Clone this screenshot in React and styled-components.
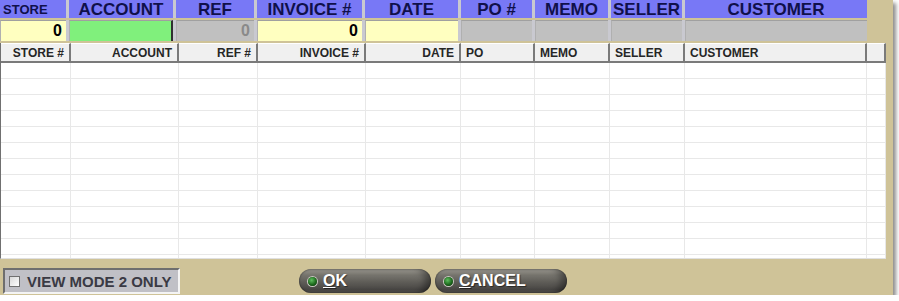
import React from "react";
import styled, { createGlobalStyle } from "styled-components";

const Global = createGlobalStyle`
  html, body { margin: 0; padding: 0; background: #ffffff; }
  body { font-family: "Liberation Sans", Arial, sans-serif; }
`;

const Window = styled.div`
  width: 893px;
  height: 295px;
  background: #cfc398;
  box-shadow: 3px 3px 4px rgba(0, 0, 0, 0.45);
  display: flex;
  flex-direction: column;
  box-sizing: border-box;
`;

const TOP_COLS = "66px 104px 78px 105px 93px 71px 73px 71px 182px";

const TopRow = styled.div`
  display: grid;
  grid-template-columns: ${TOP_COLS};
  column-gap: 3px;
  width: 867px;
  background: #c9c9d0;
  height: ${(p) => p.$h}px;
  margin-bottom: ${(p) => p.$mb || 0}px;
`;

const HeadCell = styled.div`
  background: #7878f6;
  color: #10104a;
  font-weight: bold;
  font-size: ${(p) => (p.$small ? 13 : 17)}px;
  display: flex;
  align-items: center;
  justify-content: ${(p) => (p.$left ? "flex-start" : "center")};
  padding-left: ${(p) => (p.$left ? 3 : 0)}px;
  line-height: 1;
`;

const InputCell = styled.div`
  background: ${(p) => p.$bg};
  color: ${(p) => p.$color || "#000"};
  font-weight: bold;
  font-size: 16px;
  display: flex;
  align-items: center;
  justify-content: flex-end;
  padding-right: 4px;
  box-sizing: border-box;
  border-top: 1px solid #a0a0a0;
  border-left: 1px solid #b0b0b0;
  border-right: ${(p) => (p.$caret ? "2px solid #303030" : "0")};
`;

const GRID_COLS = "70px 108px 79px 108px 95px 74px 75px 75px 182px 1fr";

const Grid = styled.div`
  width: 886px;
  height: 216px;
  background: #ffffff;
  border-left: 1px solid #707070;
  border-bottom: 1px solid #e0e0e0;
  box-sizing: border-box;
  display: flex;
  flex-direction: column;
  overflow: hidden;
`;

const GridHeader = styled.div`
  display: grid;
  grid-template-columns: ${GRID_COLS};
  height: 20px;
  flex: none;
`;

const GridHeadCell = styled.div`
  background: #f0f0f0;
  border-right: 2px solid #7a7a7a;
  border-bottom: 2px solid #7a7a7a;
  border-top: 1px solid #ffffff;
  box-sizing: border-box;
  font-size: 12px;
  font-weight: bold;
  color: #262626;
  display: flex;
  align-items: center;
  justify-content: ${(p) => (p.$right ? "flex-end" : "flex-start")};
  padding: 0 5px;
`;

const GridRow = styled.div`
  display: grid;
  grid-template-columns: ${GRID_COLS};
  height: 16px;
  flex: none;
`;

const GridCell = styled.div`
  border-right: 1px solid #e8e8e8;
  border-bottom: 1px solid #e8e8e8;
  box-sizing: border-box;
`;

const Footer = styled.div`
  flex: 1;
  display: flex;
  align-items: center;
  padding: 8px 0 0 3px;
  box-sizing: border-box;
`;

const CheckBox = styled.label`
  width: 177px;
  height: 26px;
  background: #c0c0c6;
  border: 2px solid #6e6e6e;
  border-right-color: #f4f4f4;
  border-bottom-color: #f4f4f4;
  box-sizing: border-box;
  display: flex;
  align-items: center;
  gap: 7px;
  padding-left: 4px;
  font-size: 15px;
  font-weight: bold;
  color: #3a3a44;
`;

const Box = styled.span`
  width: 11px;
  height: 11px;
  background: linear-gradient(135deg, #d8d8d8, #ffffff);
  border: 1px solid #707070;
  box-sizing: border-box;
`;

const Buttons = styled.div`
  display: flex;
  gap: 4px;
  margin-left: 119px;
`;

const Pill = styled.div`
  width: 132px;
  height: 24px;
  border-radius: 12px;
  background: linear-gradient(
    to bottom,
    #a8a59c 0%,
    #77756e 25%,
    #5e5c57 55%,
    #4a4845 85%,
    #5c5a55 100%
  );
  box-shadow: inset 0 0 2px rgba(0, 0, 0, 0.6), inset -6px 0 6px rgba(0, 0, 0, 0.35);
  display: flex;
  align-items: center;
  gap: 6px;
  padding-left: 9px;
  box-sizing: border-box;
  color: #ffffff;
  font-weight: bold;
  font-size: 16px;
  text-shadow: 1px 1px 1px rgba(0, 0, 0, 0.5);
`;

const Led = styled.span`
  width: 9px;
  height: 9px;
  border-radius: 50%;
  background: radial-gradient(circle at 40% 35%, #5fbf5f 0%, #1d6a1d 55%, #0c300c 100%);
  box-shadow: 0 0 0 1px #c8c8c0;
`;

const U = styled.span`
  text-decoration: underline;
`;

const tops = [
  { t: "STORE", small: true, left: true },
  { t: "ACCOUNT" },
  { t: "REF" },
  { t: "INVOICE #" },
  { t: "DATE" },
  { t: "PO #" },
  { t: "MEMO" },
  { t: "SELLER" },
  { t: "CUSTOMER" },
];

const inputs = [
  { bg: "#ffffc0", v: "0" },
  { bg: "#80f07c", v: "", caret: true },
  { bg: "#c0c0c0", v: "0", color: "#8a8a8a" },
  { bg: "#ffffc0", v: "0" },
  { bg: "#ffffc0", v: "" },
  { bg: "#c0c0c0", v: "" },
  { bg: "#c0c0c0", v: "" },
  { bg: "#c0c0c0", v: "" },
  { bg: "#c0c0c0", v: "" },
];

const gridHeads = [
  { t: "STORE #", r: true },
  { t: "ACCOUNT", r: true },
  { t: "REF #", r: true },
  { t: "INVOICE #", r: true },
  { t: "DATE", r: true },
  { t: "PO" },
  { t: "MEMO" },
  { t: "SELLER" },
  { t: "CUSTOMER" },
  { t: "" },
];

export default function App() {
  return (
    <>
      <Global />
      <Window>
        <TopRow $h={18} $mb={2}>
          {tops.map((c) => (
            <HeadCell key={c.t} $small={c.small} $left={c.left}>
              {c.t}
            </HeadCell>
          ))}
        </TopRow>
        <TopRow $h={21} $mb={2}>
          {inputs.map((c, i) => (
            <InputCell key={i} $bg={c.bg} $color={c.color} $caret={c.caret}>
              {c.v}
            </InputCell>
          ))}
        </TopRow>
        <Grid>
          <GridHeader>
            {gridHeads.map((h, i) => (
              <GridHeadCell key={i} $right={h.r}>
                {h.t}
              </GridHeadCell>
            ))}
          </GridHeader>
          {Array.from({ length: 13 }).map((_, r) => (
            <GridRow key={r}>
              {gridHeads.map((_, i) => (
                <GridCell key={i} />
              ))}
            </GridRow>
          ))}
        </Grid>
        <Footer>
          <CheckBox>
            <Box />
            VIEW MODE 2 ONLY
          </CheckBox>
          <Buttons>
            <Pill>
              <Led />
              <span>
                <U>O</U>K
              </span>
            </Pill>
            <Pill>
              <Led />
              <span>
                <U>C</U>ANCEL
              </span>
            </Pill>
          </Buttons>
        </Footer>
      </Window>
    </>
  );
}
